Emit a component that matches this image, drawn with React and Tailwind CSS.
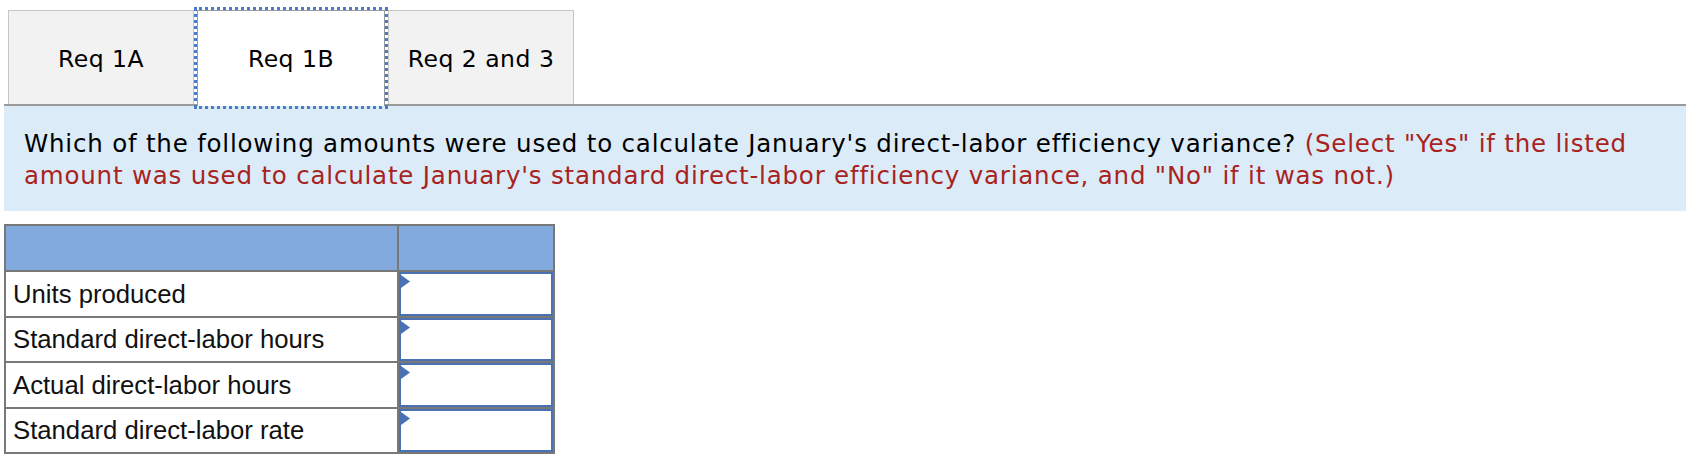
import React from "react";

const rows = [
  "Units produced",
  "Standard direct-labor hours",
  "Actual direct-labor hours",
  "Standard direct-labor rate",
];

function Tab({ label, active }) {
  if (active) {
    return (
      <div className="relative z-10 -mb-[2px] ml-[3px] flex h-[96px] w-[188px] items-center justify-center border border-b-0 border-[#9a9a9a] bg-white pt-[2px] outline-[3px] outline-dotted outline-[#4a7bc8]">
        {label}
      </div>
    );
  }
  return (
    <div className="flex h-[94px] w-[186px] items-center justify-center border border-b-0 border-[#c6c6c6] bg-[#f2f2f2] pt-[4px]">
      {label}
    </div>
  );
}

function AnswerCell() {
  return (
    <div className="relative h-full border-2 border-[#4a72b2] bg-white">
      <svg className="absolute left-0 top-[1px]" width="9" height="13" viewBox="0 0 9 13">
        <polygon points="0,0 9,6.5 0,13" fill="#4a72b2" />
      </svg>
    </div>
  );
}

export default function App() {
  return (
    <div className="min-h-[462px] bg-white text-black">
      {/* tabs */}
      <div
        className="flex items-end pl-2 pt-[10px] text-[23.5px] tracking-[0.5px] text-black"
        style={{ fontFamily: '"DejaVu Sans", Verdana, sans-serif' }}
      >
        <Tab label="Req 1A" />
        <Tab label="Req 1B" active />
        <div className="ml-[3px]">
          <Tab label="Req 2 and 3" />
        </div>
      </div>

      {/* instructions */}
      <div
        className="ml-1 border-t-2 border-[#9a9a9a] bg-[#dcebf8] pb-[20px] pl-[20px] pr-4 pt-[22px] text-[24.5px] leading-[31.6px] tracking-[0.8px]"
        style={{ fontFamily: '"DejaVu Sans", Verdana, sans-serif' }}
      >
        Which of the following amounts were used to calculate January's direct-labor efficiency variance?{" "}
        <span className="text-[#a8231e]">
          (Select "Yes" if the listed amount was used to calculate January's standard direct-labor efficiency
          variance, and "No" if it was not.)
        </span>
      </div>

      {/* answer table */}
      <div
        className="ml-1 mt-[13px] grid w-[551px] grid-cols-[391px_154px] gap-[2px] bg-[#787878] p-[2px] text-[25.7px] text-[#111]"
        style={{ fontFamily: '"Liberation Sans", Arial, sans-serif' }}
      >
        <div className="h-[44px] bg-[#82aadf]" />
        <div className="h-[44px] bg-[#82aadf]" />
        {rows.map((r) => (
          <React.Fragment key={r}>
            <div className="flex h-[43.5px] items-center bg-white pl-[7px]">{r}</div>
            <div className="h-[43.5px] bg-white">
              <AnswerCell />
            </div>
          </React.Fragment>
        ))}
      </div>
    </div>
  );
}
